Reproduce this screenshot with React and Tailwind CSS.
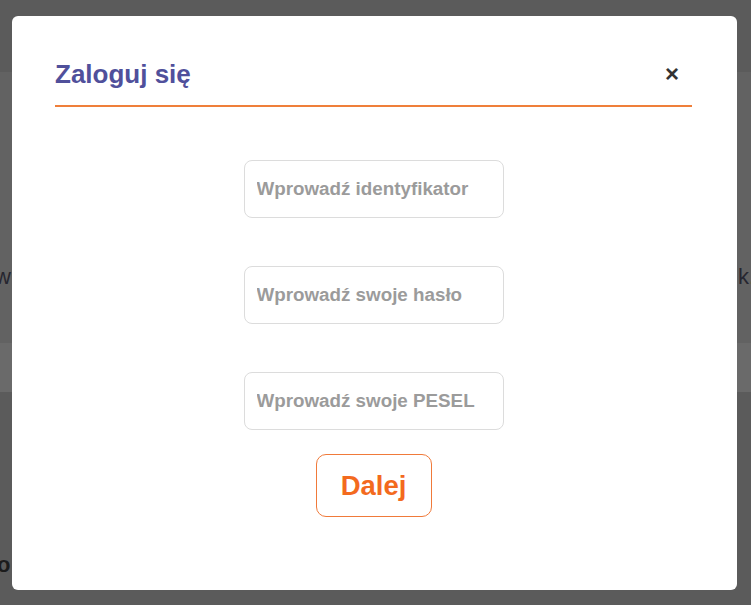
import React from "react";

const fields = [
  "Wprowadź identyfikator",
  "Wprowadź swoje hasło",
  "Wprowadź swoje PESEL",
];

const LoginModal = () => {
  return (
    <div className="absolute left-[12px] top-[16px] w-[725px] h-[574px] bg-white rounded-[6px] pt-[40px] pl-[43px] pr-[45px]">
      <div className="flex items-center justify-between h-[36px] mb-[13px]">
        <h2 className="text-[26px] font-bold text-[#50509b] leading-[36px]">
          Zaloguj się
        </h2>
        <button className="mr-[13px] text-[#333] text-[24px] leading-none font-bold">
          ×
        </button>
      </div>
      <div className="h-[2px] bg-[#ef7f3a]" />
      <div className="flex flex-col items-center pt-[53px]">
        {fields.map((f, i) => (
          <input
            key={f}
            type={i === 1 ? "password" : "text"}
            placeholder={f}
            className={`w-[260px] h-[58px] border border-[#dcdcdc] rounded-[8px] pl-[12px] text-[18.8px] font-bold outline-none placeholder:text-[#9b9b9b] ${
              i < 2 ? "mb-[48px]" : "mb-[24px]"
            }`}
          />
        ))}
        <button className="w-[116px] h-[63px] border-[1.5px] border-[#f07a3a] rounded-[10px] text-[27.5px] font-bold text-[#f36a1e]">
          Dalej
        </button>
      </div>
    </div>
  );
};

const App = () => {
  return (
    <div
      className="relative w-full h-[605px] overflow-hidden flex flex-col"
      style={{ fontFamily: '"Liberation Sans", Arial, sans-serif' }}
    >
      <div className="h-[72px] bg-[#5b5b5b]" />
      <div className="h-[271px] bg-[#626262] flex items-end justify-between pb-[50px] text-[22px] text-[#262630]">
        <span className="-ml-[5px]">w</span>
        <span className="-mr-[4px]">
          k<span className="text-[#8a5a30]">.</span>
        </span>
      </div>
      <div className="h-[49px] bg-[#6a6a6a]" />
      <div className="flex-1 bg-[#5b5b5b] flex items-end pb-[24px]">
        <span className="-ml-[3px] text-[22px] font-bold text-[#1c1c1c]">o</span>
      </div>
      <LoginModal />
    </div>
  );
};

export default App;
